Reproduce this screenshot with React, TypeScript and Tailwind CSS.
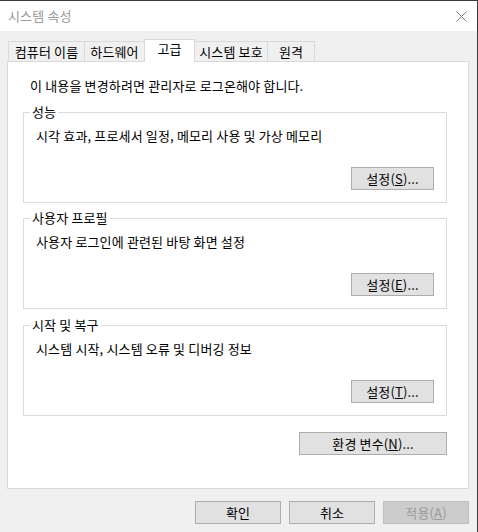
import React from "react";

const font = { fontFamily: '"Noto Sans CJK KR", "Noto Sans", sans-serif', letterSpacing: "0.15px" };

function Btn({ children, className = "", disabled = false }: { children: React.ReactNode; className?: string; disabled?: boolean }) {
  return (
    <div
      className={
        "flex items-center justify-center h-[23px] text-[13px] leading-[16px] border " +
        (disabled ? "bg-[#cccccc] border-[#bfbfbf] text-[#9a9a9a] " : "bg-[#e1e1e1] border-[#adadad] text-black ") +
        className
      }
    >
      {children}
    </div>
  );
}

function Group({ label, desc, btn, className = "" }: { label: string; desc: string; btn: React.ReactNode; className?: string }) {
  return (
    <div className={"relative ml-[15px] w-[424px] h-[91px] border border-[#dcdcdc] flex flex-col " + className}>
      <div className="absolute left-[6px] top-[-9px] px-[2px] bg-white text-[13px] leading-[16px] text-black">{label}</div>
      <div className="pl-[12px] pt-[15px] text-[13px] leading-[16px] text-black">{desc}</div>
      <div className="mt-auto mb-[12px] mr-[12px] self-end">
        <Btn className="w-[83px]">{btn}</Btn>
      </div>
    </div>
  );
}

export default function App() {
  return (
    <div className="w-[478px] h-[532px] bg-[#f0f0f0] border-t border-r border-[#3a3a3a] flex flex-col" style={font}>
      <div className="h-[30px] bg-white flex items-center justify-between pl-[8px] pr-[10px]">
        <span className="text-[13px] leading-[16px] text-[#999999]">시스템 속성</span>
        <svg width="11" height="11" viewBox="0 0 11 11">
          <path d="M0.5 0.5 L10.5 10.5 M10.5 0.5 L0.5 10.5" stroke="#7a7a7a" strokeWidth="1" fill="none" />
        </svg>
      </div>
      <div className="pt-[8px]">
        <div className="ml-[8px] h-[22px] flex items-end text-[13px] leading-[16px] text-black">
          <div className="w-[77px] h-[20px] border border-b-0 border-[#d9d9d9] bg-[#f0f0f0] flex items-center justify-center">컴퓨터 이름</div>
          <div className="-ml-px w-[61px] h-[20px] border border-b-0 border-[#d9d9d9] bg-[#f0f0f0] flex items-center justify-center">하드웨어</div>
          <div className="-ml-px relative z-10 w-[51px] h-[23px] -mb-px border border-b-0 border-[#d9d9d9] bg-white flex items-start justify-center pt-[1px]">고급</div>
          <div className="-ml-px w-[74px] h-[20px] border border-b-0 border-[#d9d9d9] bg-[#f0f0f0] flex items-center justify-center">시스템 보호</div>
          <div className="-ml-px w-[48px] h-[20px] border border-b-0 border-[#d9d9d9] bg-[#f0f0f0] flex items-center justify-center">원격</div>
        </div>
        <div className="ml-[7px] w-[462px] h-[428px] bg-white border border-[#d9d9d9] flex flex-col">
          <div className="pl-[22px] pt-[16px] text-[13px] leading-[16px] text-black">이 내용을 변경하려면 관리자로 로그온해야 합니다.</div>
          <Group
            className="mt-[18px]"
            label="성능"
            desc="시각 효과, 프로세서 일정, 메모리 사용 및 가상 메모리"
            btn={<span>설정(<span className="underline">S</span>)...</span>}
          />
          <Group
            className="mt-[15px]"
            label="사용자 프로필"
            desc="사용자 로그인에 관련된 바탕 화면 설정"
            btn={<span>설정(<span className="underline">E</span>)...</span>}
          />
          <Group
            className="mt-[16px]"
            label="시작 및 복구"
            desc="시스템 시작, 시스템 오류 및 디버깅 정보"
            btn={<span>설정(<span className="underline">T</span>)...</span>}
          />
          <div className="ml-[291px] mt-[16px]">
            <Btn className="w-[148px]"><span>환경 변수(<span className="underline">N</span>)...</span></Btn>
          </div>
        </div>
      </div>
      <div className="mt-[12px] flex justify-end gap-[8px] pr-[8px]">
        <Btn className="w-[86px]">확인</Btn>
        <Btn className="w-[86px]">취소</Btn>
        <Btn className="w-[86px]" disabled><span>적용(<span className="underline">A</span>)</span></Btn>
      </div>
    </div>
  );
}
